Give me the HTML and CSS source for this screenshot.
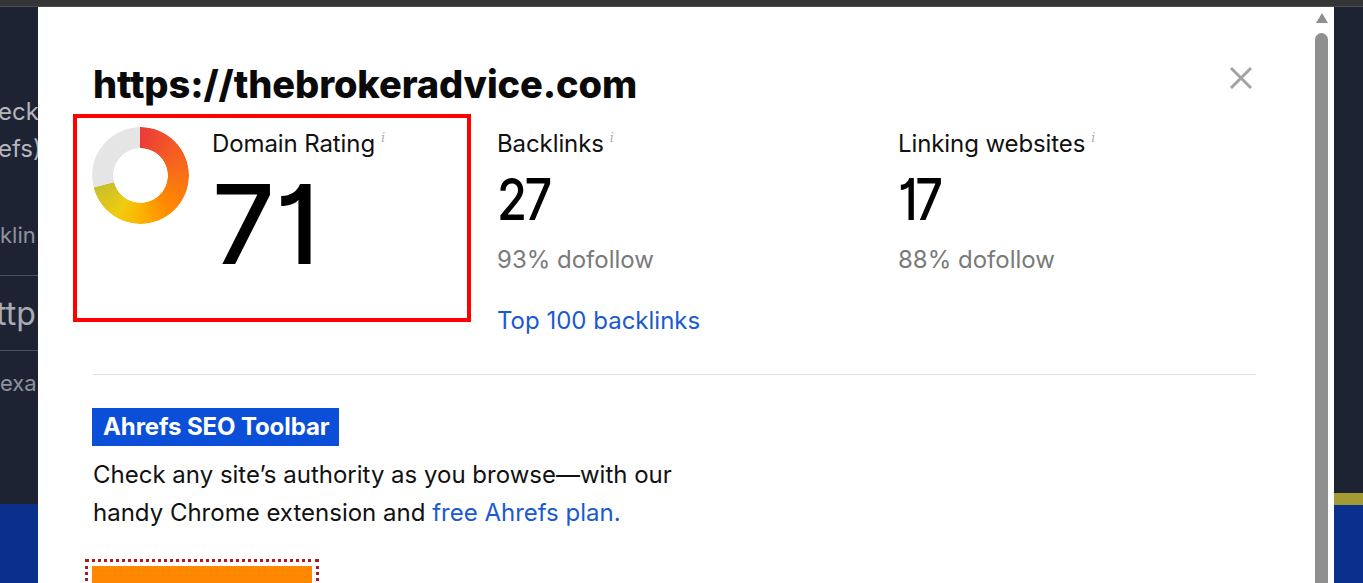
FILE: index.html
```html
<!DOCTYPE html>
<html lang="en">
<head>
<meta charset="utf-8">
<title>Website Authority Checker</title>
<link rel="stylesheet" href="styles.css">
</head>
<body>
<div class="topbar"></div>
<main class="page">
  <div class="bg-side">
    <div class="bg-l1">eck t</div>
    <div class="bg-l2">efs)</div>
    <div class="bg-l3">klin</div>
    <div class="bg-rule"></div>
    <div class="bg-l4">ttp</div>
    <div class="bg-rule"></div>
    <div class="bg-l5">exa</div>
  </div>
  <div class="band"><div class="band-gold"></div></div>
</main>

<div class="modal">
  <div class="modal-body">
    <div class="modal-head">
      <h1 class="site">https://thebrokeradvice.com</h1>
      <button class="close" aria-label="Close">
        <svg width="24" height="24" viewBox="0 0 24 24"><path d="M2 2 L22 22 M22 2 L2 22" stroke="#a3a3a3" stroke-width="3" fill="none"/></svg>
      </button>
    </div>

    <div class="stats">
      <div class="stat stat-dr">
        <div class="donut"></div>
        <div class="stat-text">
          <div class="label">Domain Rating<span class="info">i</span></div>
          <div class="big"><span class="num-dr">71</span></div>
        </div>
      </div>
      <div class="stat stat-col">
        <div class="label">Backlinks<span class="info">i</span></div>
        <div class="num"><span class="num-sm">27</span></div>
        <div class="sub">93% dofollow</div>
        <a class="link" href="#">Top 100 backlinks</a>
      </div>
      <div class="stat stat-col stat-last">
        <div class="label">Linking websites<span class="info">i</span></div>
        <div class="num"><span class="num-sm">17</span></div>
        <div class="sub">88% dofollow</div>
      </div>
    </div>

    <div class="divider"></div>

    <div class="promo">
      <span class="badge">Ahrefs SEO Toolbar</span>
      <p class="promo-text">Check any site’s authority as you browse—with our<br>handy Chrome extension and <a class="link-inline" href="#">free Ahrefs plan.</a></p>
      <div class="cta-wrap"><div class="cta"></div></div>
    </div>
  </div>
  <div class="scrollbar">
    <div class="sb-arrow"></div>
    <div class="sb-thumb"></div>
  </div>
</div>
</body>
</html>
```
FILE: styles.css
```css
* { box-sizing: border-box; }
html, body { margin: 0; padding: 0; }
body {
  width: 1363px;
  height: 583px;
  overflow: hidden;
  background: #1e2333;
  font-family: Inter, "Noto Sans", sans-serif;
  position: relative;
}
.topbar {
  height: 7px;
  background: #353535;
  border-bottom: 1px solid #4d4d4d;
}
.page {
  height: 576px;
  display: flex;
  flex-direction: column;
  justify-content: space-between;
}
.bg-side {
  padding-top: 86px;
  display: flex;
  flex-direction: column;
  color: #b3b6bd;
  white-space: nowrap;
}
.bg-l1, .bg-l2 { font-size: 24px; line-height: 37px; margin-left: -2px; }
.bg-l3 { font-size: 22px; color: #8e929b; margin-top: 53px; line-height: 30px; }
.bg-rule { height: 1px; background: #4c5160; width: 40px; }
.bg-l3 + .bg-rule { margin-top: 25px; }
.bg-l4 { font-size: 32px; line-height: 40px; margin: 18px 0 16px -4px; color: #a9acb4; }
.bg-l5 { font-size: 22px; color: #8e929b; margin-top: 18px; line-height: 28px; }
.band {
  height: 79px;
  background: #0b2f8c;
  position: relative;
}
.band-gold {
  position: absolute;
  right: 0;
  top: -11px;
  width: 29px;
  height: 12px;
  background: #a39935;
}

/* modal */
.modal {
  position: absolute;
  left: 38px;
  top: 7px;
  width: 1296px;
  height: 576px;
  background: #fff;
  display: flex;
  overflow: hidden;
}
.modal-body {
  flex: 1;
  min-width: 0;
  padding: 55px 57px 0 55px;
  color: #000;
}
.modal-head {
  display: flex;
  justify-content: space-between;
  align-items: flex-start;
}
.site {
  margin: 0;
  font-size: 38px;
  font-weight: 800;
  line-height: 44px;
  letter-spacing: -0.1px;
  color: #0a0a0a;
}
.close {
  border: 0;
  background: none;
  padding: 0;
  margin: 4px 3px 0 0;
  width: 24px;
  height: 24px;
  cursor: pointer;
}
.close svg { display: block; }

.stats {
  display: flex;
  margin-top: 8px;
  height: 208px;
}
.stat-dr {
  width: 398px;
  height: 208px;
  flex: none;
  margin-left: -20px;
  border: 4px solid #f00;
  display: flex;
  padding: 9px 0 0 15px;
  gap: 23px;
}
.donut {
  width: 97px;
  height: 97px;
  border-radius: 50%;
  flex: none;
  background: conic-gradient(from 0deg,
    #ec3a3a 0deg, #f45a24 50deg, #fb7512 100deg, #ff8a00 140deg,
    #fbb800 185deg, #f0cc10 210deg, #c7c02c 255deg,
    #e5e5e5 256deg, #e5e5e5 360deg);
  -webkit-mask: radial-gradient(circle, transparent 27px, #000 27.6px);
  mask: radial-gradient(circle, transparent 27px, #000 27.6px);
}
.stat-text { display: flex; flex-direction: column; }
.label {
  font-size: 24px;
  line-height: 26px;
  color: #111;
  letter-spacing: -0.1px;
  white-space: nowrap;
}
.stat-dr .label { margin-top: 4px; }
.info {
  font-family: "DejaVu Serif", serif;
  font-style: italic;
  font-size: 13px;
  line-height: 13px;
  color: #b0b0b0;
  vertical-align: top;
  margin-left: 6px;
  position: relative;
  top: 0;
}
.big { height: 134px; }
.num-dr {
  display: inline-block;
  font-size: 110px;
  font-weight: 500;
  line-height: 134px;
  letter-spacing: 0;
  font-feature-settings: "cv01";
}
.stat-col {
  width: 401px;
  flex: none;
  padding-top: 17px;
  display: flex;
  flex-direction: column;
  align-items: flex-start;
}
.stat-col:nth-child(2) { margin-left: 26px; }
.stat-last { flex: 1; width: auto; }
.num { margin-top: 16px; height: 52px; }
.num-sm {
  display: inline-block;
  font-size: 58px;
  font-weight: 500;
  line-height: 52px;
  letter-spacing: -3px;
  transform: scaleX(0.84);
  transform-origin: left center;
  font-feature-settings: "cv01";
}
.sub {
  margin-top: 20px;
  font-size: 24px;
  line-height: 30px;
  color: #7a7a7a;
}
.link {
  margin-top: 31px;
  font-size: 24px;
  line-height: 30px;
  color: #1a5ad0;
  text-decoration: none;
}

.divider {
  height: 1px;
  background: #e0e0e0;
  margin-top: 52px;
}
.promo { padding-top: 33px; }
.badge {
  display: inline-block;
  background: #0b4fd8;
  color: #fff;
  font-weight: 700;
  font-size: 24px;
  line-height: 38px;
  padding: 0 10px 0 11px;
  margin-left: -1px;
  letter-spacing: -0.1px;
}
.promo-text {
  margin: 10px 0 0;
  font-size: 24px;
  line-height: 38px;
  color: #111;
}
.link-inline { color: #1a5ad0; text-decoration: none; }
.cta-wrap {
  margin: 27px 0 0 -8px;
  width: 234px;
  height: 40px;
  border: 3px dotted #b3191c;
  padding: 4px 4px 0 4px;
}
.cta {
  background: #ff8800;
  height: 40px;
}

.scrollbar {
  width: 21px;
  flex: none;
  display: flex;
  flex-direction: column;
  align-items: center;
  padding: 6px 4px 0 0;
  background: #fff;
}
.sb-arrow {
  width: 0;
  height: 0;
  border-left: 6.5px solid transparent;
  border-right: 6.5px solid transparent;
  border-bottom: 10px solid #8f8f8f;
}
.sb-thumb {
  margin-top: 10px;
  width: 13px;
  flex: 1;
  background: #8f8f8f;
  border-radius: 7px 7px 0 0;
}
```
